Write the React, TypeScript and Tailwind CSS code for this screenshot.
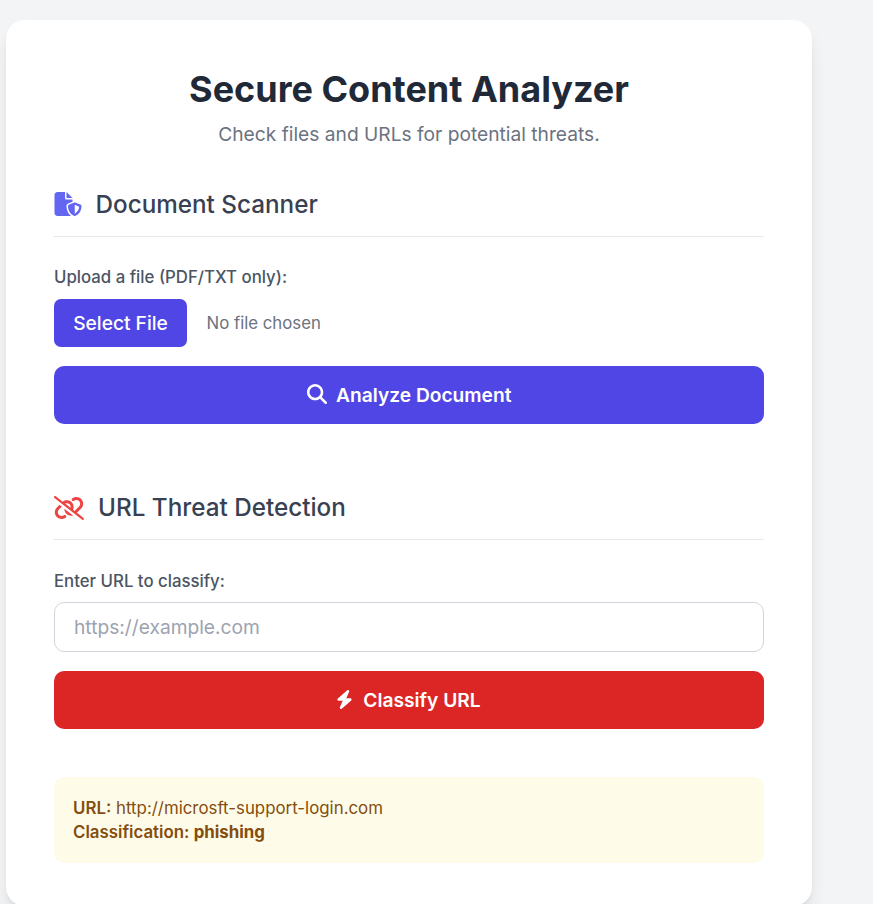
import React from "react";
import { FaBolt, FaFileShield, FaLinkSlash, FaMagnifyingGlass } from "react-icons/fa6";

export default function App() {
  return (
    <div className="h-[904px] overflow-hidden bg-[#f3f4f6] pt-5 pl-1.5 font-['Inter',sans-serif] text-[19.2px] leading-[28.8px]">
      <main className="h-[886px] w-[806px] rounded-[19px] bg-white px-12 pt-12 shadow-[0_12px_18px_-3px_rgba(0,0,0,0.1),0_5px_7px_-4px_rgba(0,0,0,0.1)]">
        <h1 className="text-center text-[36px] leading-[43px] font-bold text-[#1f2937]">Secure Content Analyzer</h1>
        <p className="mt-[9px] text-center text-[#6b7280]">Check files and URLs for potential threats.</p>
        <section className="mt-[38px]">
          <h2 className="flex h-[50px] items-start border-b border-[#e5e7eb] text-[24.25px] font-medium text-[#374151]">
            <FaFileShield className="mt-[5px] mr-[14px] -ml-[0.5px] h-6 w-[28px] text-[#6366f1]" />
            <span className="pt-1">Document Scanner</span>
          </h2>
          <label className="mt-[28px] block text-[16.8px] leading-6 font-medium text-[#4b5563]">Upload a file (PDF/TXT only):</label>
          <div className="mt-[10px] flex items-center">
            <button className="h-12 w-[133px] rounded-[7px] bg-[#4f46e5] pt-px font-medium text-white">Select File</button>
            <span className="ml-[19.5px] pt-px text-[16.8px] text-[#6b7280]">No file chosen</span>
          </div>
          <button className="mt-[19px] flex h-[58px] w-full items-center justify-center rounded-[10px] bg-[#4f46e5] font-semibold text-white">
            <FaMagnifyingGlass className="mr-[9.5px] mb-0.5 h-5 w-5" />
            <span className="pt-px">Analyze Document</span>
          </button>
        </section>
        <section className="mt-[68px]">
          <h2 className="flex h-12 items-start border-b border-[#e5e7eb] text-[24.25px] font-medium text-[#374151]">
            <FaLinkSlash className="mt-1 mr-[14px] h-6 w-[30px] text-[#ef4444]" />
            <span className="pt-0.5">URL Threat Detection</span>
          </h2>
          <label className="mt-[29px] block text-[16.8px] leading-6 font-medium text-[#4b5563]">Enter URL to classify:</label>
          <input placeholder="https://example.com" className="mt-[9px] block h-[50px] w-full rounded-[10px] border border-[#d1d5db] px-[19px] placeholder:text-[#9ca3af]" />
          <button className="mt-[19px] flex h-[58px] w-full items-center justify-center rounded-[10px] bg-[#dc2626] pr-px font-semibold text-white">
            <FaBolt className="mr-[10px] h-[19px] w-[17px]" />
            <span className="pt-px">Classify URL</span>
          </button>
        </section>
        <div className="mt-12 h-[86px] rounded-[10px] bg-[#fefce8] px-[19px] pt-[19px] text-[16.85px] leading-6 text-[#854d0e]">
          <p><strong className="font-semibold">URL:</strong> http://microsft-support-login.com</p>
          <p className="font-semibold">Classification: <span className="font-bold">phishing</span></p>
        </div>
      </main>
    </div>
  );
}
